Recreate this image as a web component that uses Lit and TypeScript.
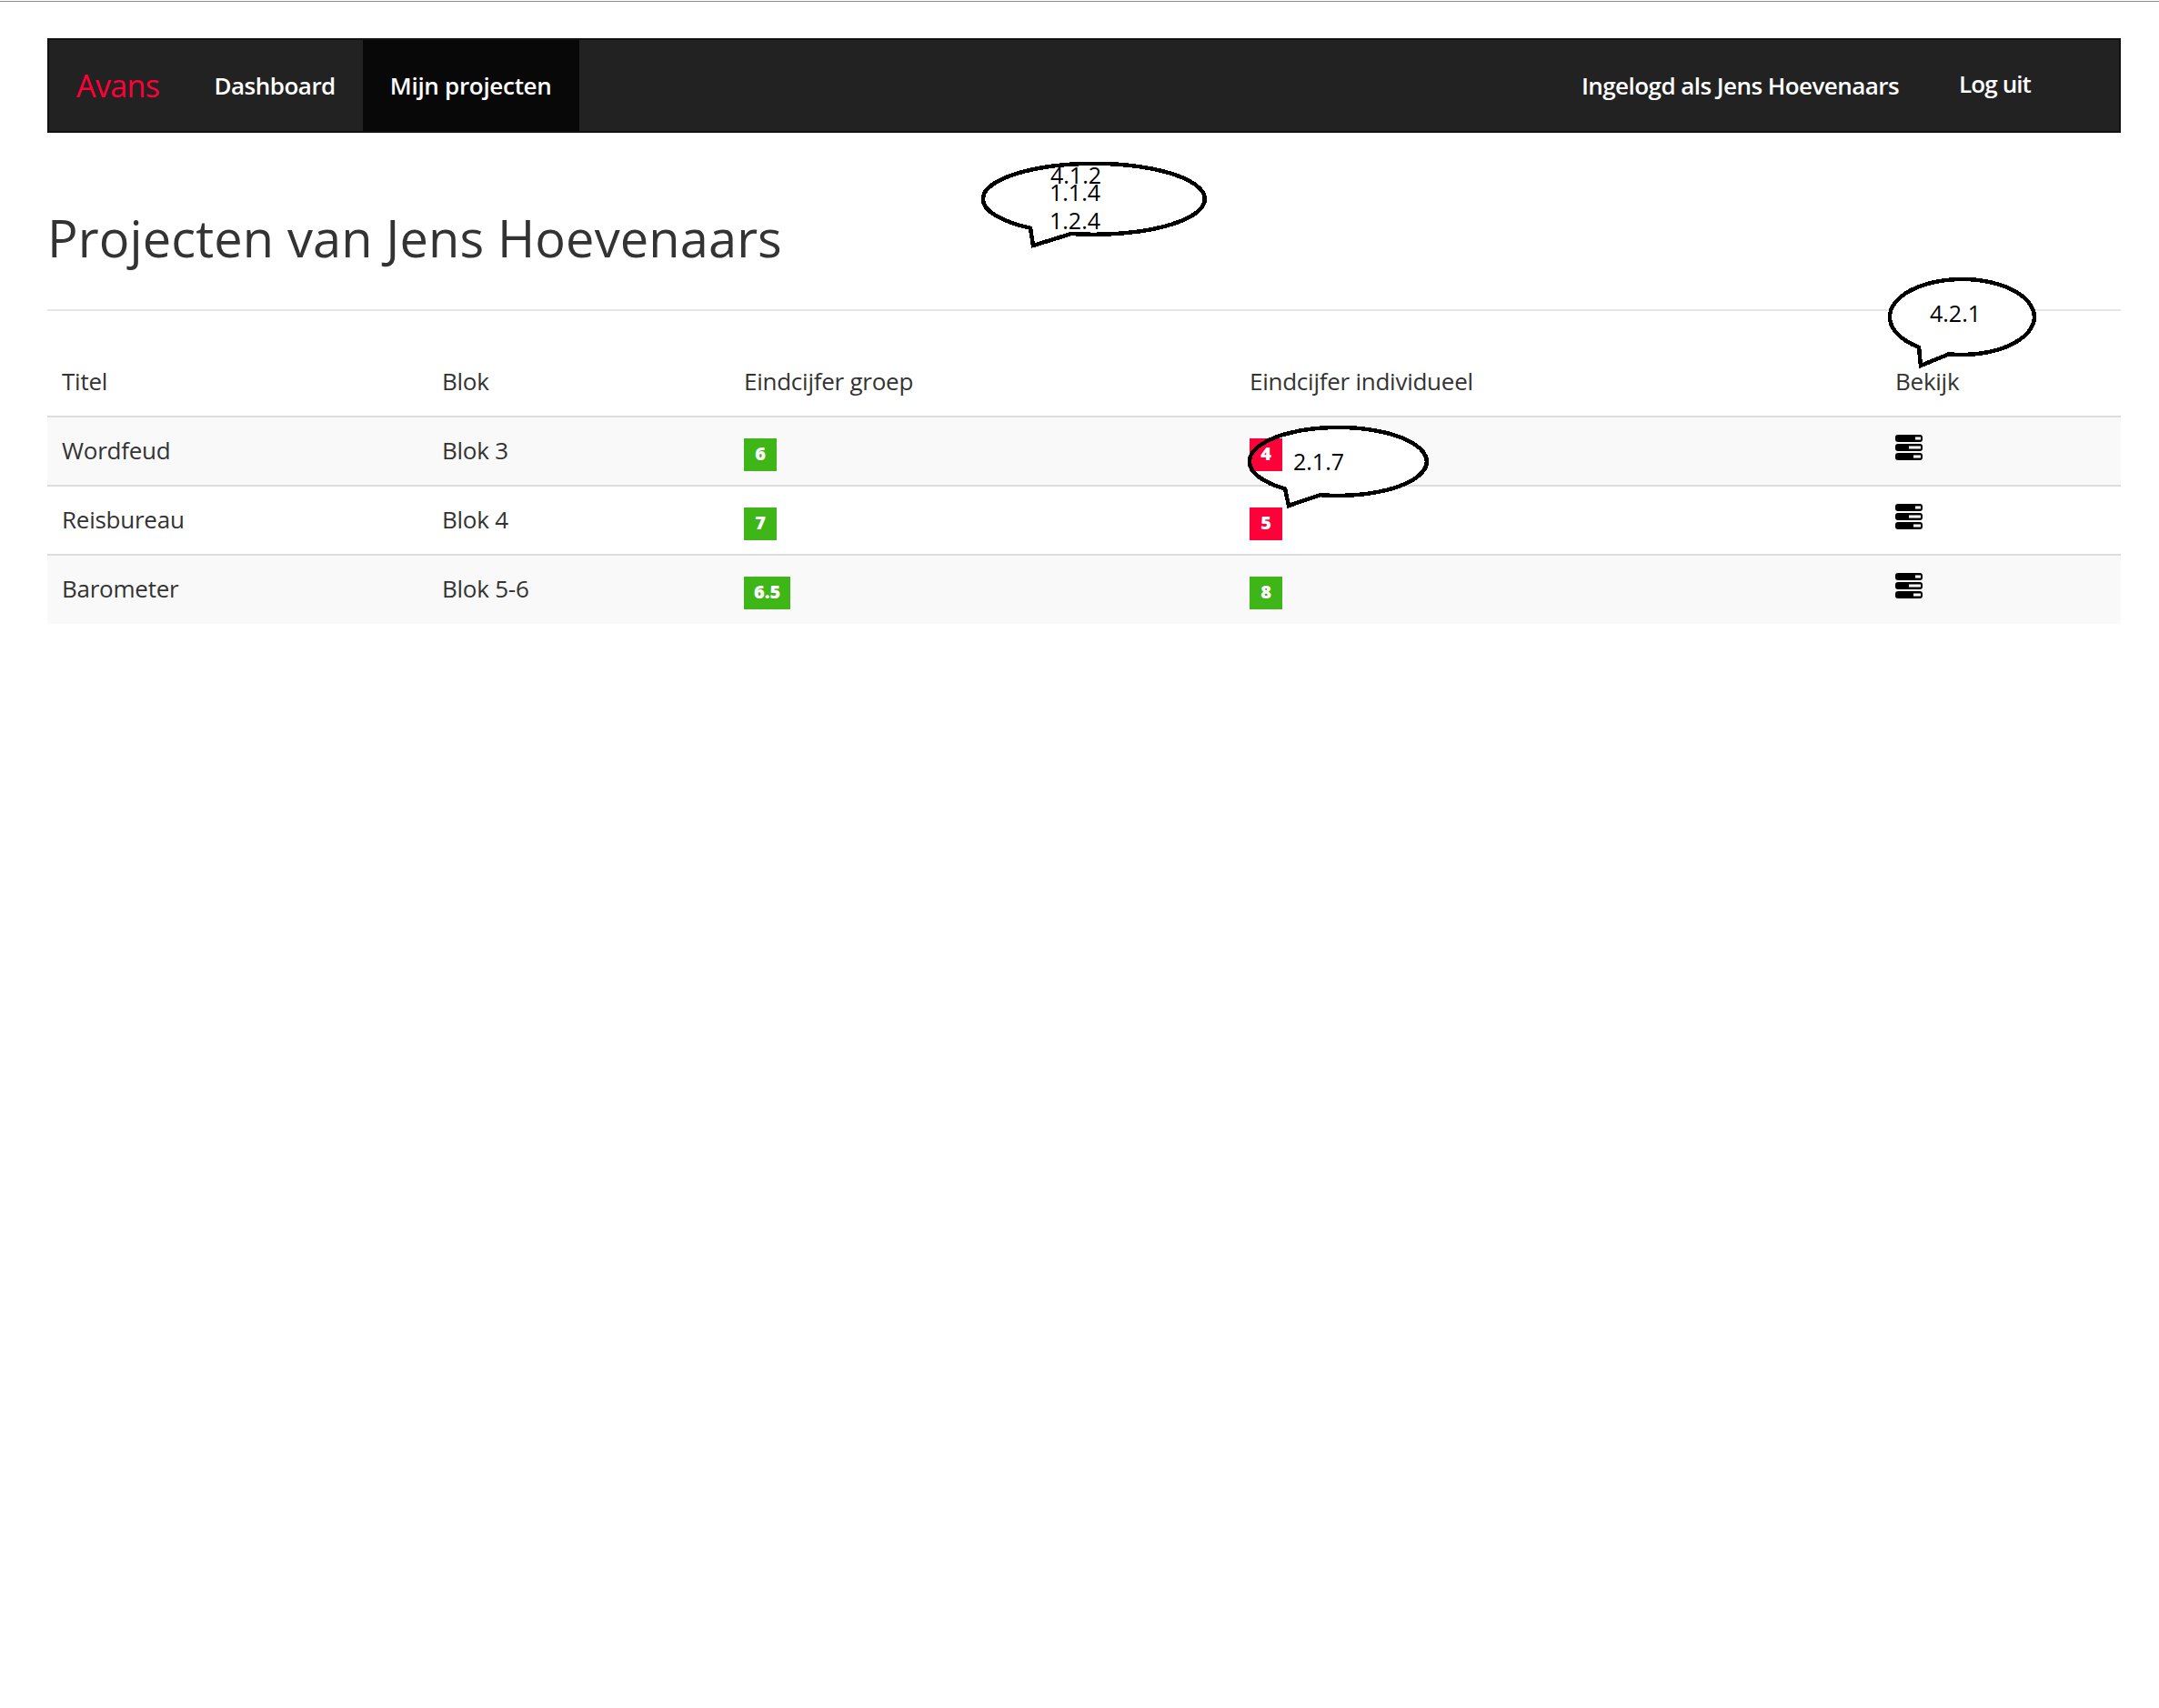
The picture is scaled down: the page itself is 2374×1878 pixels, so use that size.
import { css, html, svg, LitElement } from 'lit';
import { customElement } from 'lit/decorators.js';

const bubbles = [
  {
    d: 'M1133 250.8 A122 39 0 1 1 1178 257 L1136 270 Z',
    labels: [
      { x: 1155, y: 201.5, t: '4.1.2' },
      { x: 1154, y: 220.5, t: '1.1.4' },
      { x: 1154, y: 252, t: '1.2.4' },
    ],
  },
  {
    d: 'M2110 381.8 A79.5 41.5 0 1 1 2143 389.3 L2112 402 Z',
    labels: [{ x: 2122, y: 353.5, t: '4.2.1' }],
  },
  {
    d: 'M1413 537.5 A97.5 37.5 0 1 1 1452 544.2 L1417 556 Z',
    labels: [{ x: 1422, y: 516.5, t: '2.1.7' }],
  },
];

const rows = [
  { title: 'Wordfeud', block: 'Blok 3', group: '6', solo: '4', soloFail: true },
  { title: 'Reisbureau', block: 'Blok 4', group: '7', solo: '5', soloFail: true },
  { title: 'Barometer', block: 'Blok 5-6', group: '6.5', solo: '8', soloFail: false },
];

const tasksIcon = html`<svg class="icon" width="30" height="28" viewBox="0 0 30 28">
  <rect x="0" y="0" width="30" height="8" rx="3" fill="#000"></rect>
  <rect x="0" y="10" width="30" height="8" rx="3" fill="#000"></rect>
  <rect x="0" y="20" width="30" height="8" rx="3" fill="#000"></rect>
  <rect x="22" y="2.5" width="6" height="3" fill="#fff"></rect>
  <rect x="15" y="12.5" width="13" height="3" fill="#fff"></rect>
  <rect x="20" y="22.5" width="8" height="3" fill="#fff"></rect>
</svg>`;

@customElement('app-root')
export class AppRoot extends LitElement {
  static styles = css`
    :host {
      display: block;
      position: relative;
      min-height: 1878px;
      background: #fff;
      font-family: 'Open Sans', 'Liberation Sans', sans-serif;
      color: #333;
      box-sizing: border-box;
      padding: 1px 42px 0 52px;
    }
    .topline {
      height: 1px;
      margin: 0 -42px 40px -52px;
      background: #8c8c8c;
    }
    nav {
      display: flex;
      height: 104px;
      box-sizing: border-box;
      background: #222;
      border: 2px solid #111;
      font-size: 26px;
      font-weight: 600;
      letter-spacing: -0.5px;
      color: #fff;
    }
    nav a {
      display: flex;
      align-items: center;
      padding: 0 30px 1px;
    }
    nav .brand {
      color: #ff0039;
      font-size: 34px;
      font-weight: 400;
      letter-spacing: -0.6px;
      padding: 0 30px;
    }
    nav .active {
      background: #080808;
      letter-spacing: -0.3px;
    }
    nav .spacer {
      flex: 1;
    }
    nav .user {
      padding-right: 36px;
      letter-spacing: -0.55px;
    }
    nav .logout {
      padding: 0 97px 4px 30px;
      letter-spacing: -0.9px;
    }
    h1 {
      margin: 0;
      height: 196px;
      box-sizing: border-box;
      padding-top: 78px;
      font-size: 56px;
      line-height: 74px;
      font-weight: 400;
      letter-spacing: 0.1px;
      border-bottom: 2px solid #e6e6e6;
    }
    table {
      width: 100%;
      border-collapse: collapse;
      table-layout: fixed;
      font-size: 26px;
      letter-spacing: -0.25px;
    }
    th {
      height: 116px;
      padding: 38px 16px 0;
      box-sizing: border-box;
      text-align: left;
      font-weight: 400;
      border-bottom: 2px solid #ddd;
    }
    td {
      height: 76px;
      padding: 11px 16px 0;
      box-sizing: border-box;
      vertical-align: top;
      line-height: 50px;
      border-top: 2px solid #ddd;
    }
    tr:first-child td {
      border-top: 0;
    }
    tbody tr:nth-child(odd) {
      background: #f9f9f9;
    }
    .col-title {
      width: 418px;
    }
    .col-block {
      width: 332px;
    }
    .col-group {
      width: 556px;
    }
    .col-solo {
      width: 710px;
    }
    .badge {
      position: relative;
      z-index: 2;
      display: inline-block;
      min-width: 36px;
      height: 36px;
      padding: 0 11px;
      box-sizing: border-box;
      margin-top: 12px;
      background: #3fb618;
      color: #fff;
      font-size: 20px;
      font-weight: 800;
      line-height: 34px;
      letter-spacing: 0;
      text-align: center;
      vertical-align: top;
    }
    .badge.fail {
      background: #ff0039;
    }
    .icon {
      display: block;
      margin-top: 8px;
    }
    .layer {
      position: absolute;
      left: 0;
      top: 0;
      pointer-events: none;
    }
    .fills {
      z-index: 1;
    }
    .lines {
      z-index: 3;
    }
    .lines path {
      fill: none;
      stroke: #000;
      stroke-width: 4.5;
      stroke-linejoin: miter;
      shape-rendering: crispEdges;
    }
    .lines text {
      font-family: 'Open Sans', sans-serif;
      font-size: 25px;
      fill: #000;
    }
  `;

  render() {
    return html`
      <div class="topline"></div>
      <nav>
        <a class="brand">Avans</a>
        <a>Dashboard</a>
        <a class="active">Mijn projecten</a>
        <span class="spacer"></span>
        <a class="user">Ingelogd als Jens Hoevenaars</a>
        <a class="logout">Log uit</a>
      </nav>
      <h1>Projecten van Jens Hoevenaars</h1>
      <table>
        <colgroup>
          <col class="col-title" />
          <col class="col-block" />
          <col class="col-group" />
          <col class="col-solo" />
          <col />
        </colgroup>
        <thead>
          <tr>
            <th>Titel</th>
            <th>Blok</th>
            <th>Eindcijfer groep</th>
            <th>Eindcijfer individueel</th>
            <th>Bekijk</th>
          </tr>
        </thead>
        <tbody>
          ${rows.map(
            (r) => html`<tr>
              <td>${r.title}</td>
              <td>${r.block}</td>
              <td><span class="badge">${r.group}</span></td>
              <td><span class="badge ${r.soloFail ? 'fail' : ''}">${r.solo}</span></td>
              <td>${tasksIcon}</td>
            </tr>`
          )}
        </tbody>
      </table>
      <svg class="layer fills" width="2374" height="700">
        ${bubbles.map((b) => svg`<path d=${b.d} fill="#fff"></path>`)}
      </svg>
      <svg class="layer lines" width="2374" height="700">
        ${bubbles.map(
          (b) => svg`<path d=${b.d}></path>
            ${b.labels.map((l) => svg`<text x=${l.x} y=${l.y}>${l.t}</text>`)}`
        )}
      </svg>
    `;
  }
}
